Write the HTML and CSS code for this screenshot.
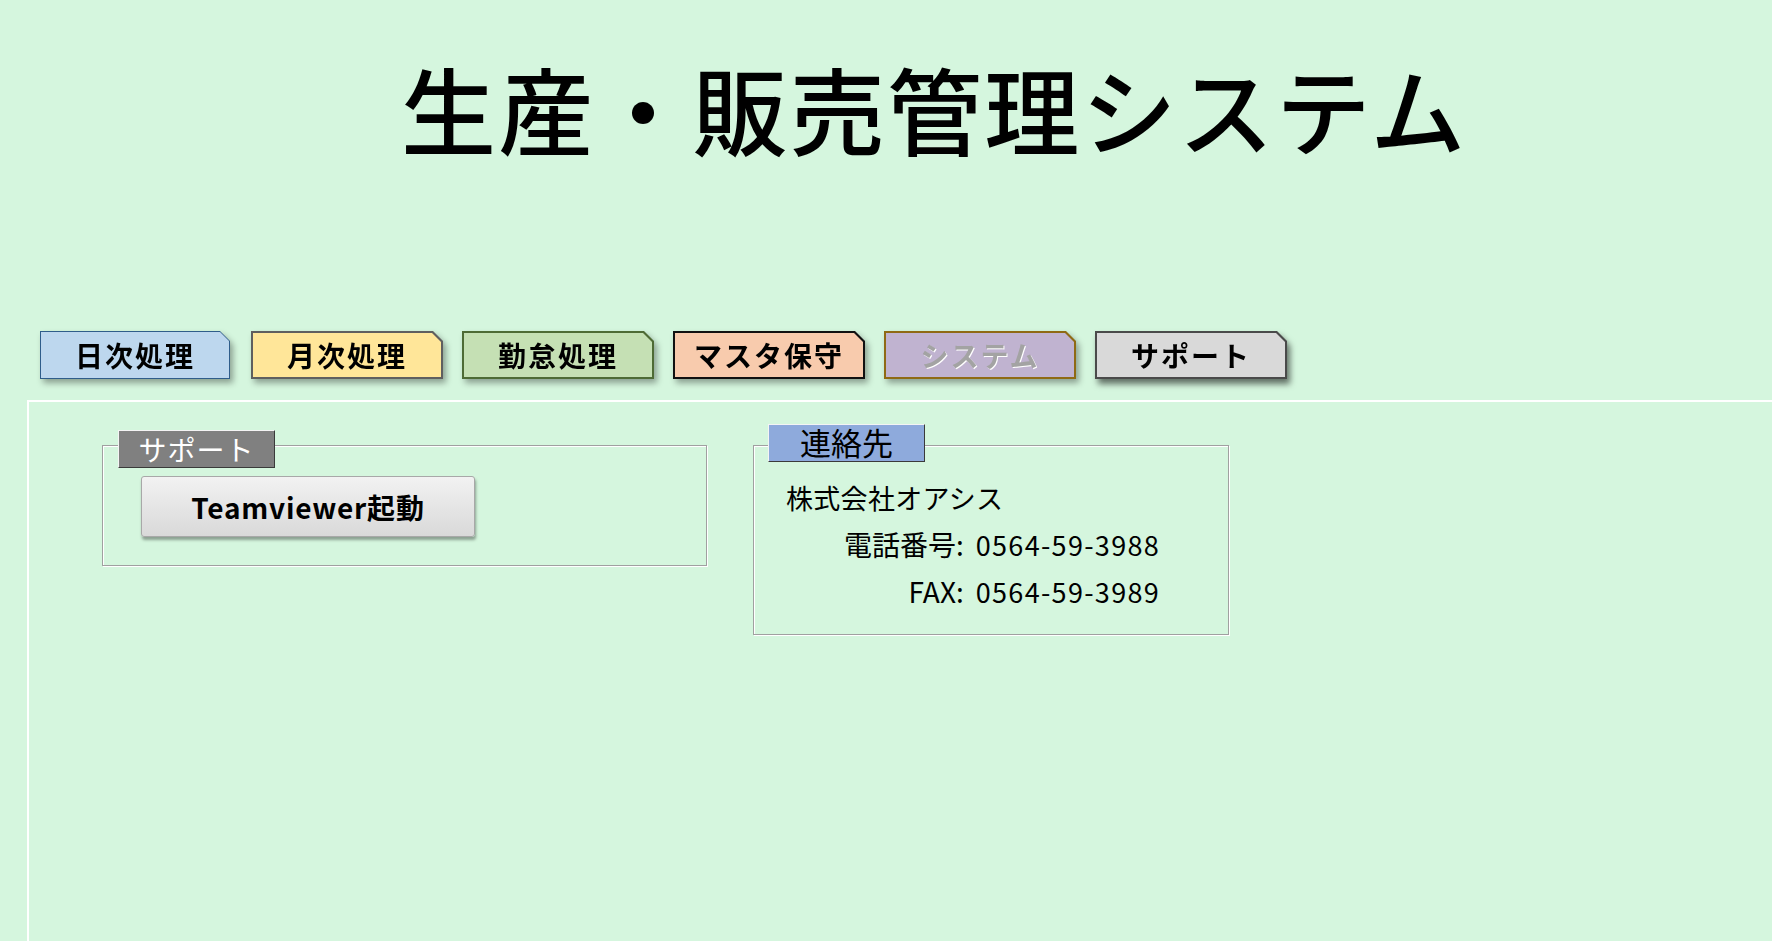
FILE: index.html
```html
<!DOCTYPE html>
<html lang="ja">
<head>
<meta charset="utf-8">
<title>生産・販売管理システム</title>
<link rel="stylesheet" href="styles.css">
</head>
<body>
<header class="title-bar">
  <h1 class="title">生産・販売管理システム</h1>
</header>
<nav class="tabs">
  <div class="tab tab-daily"><div class="tab-edge"><div class="tab-fill">日次処理</div></div></div>
  <div class="tab tab-monthly"><div class="tab-edge"><div class="tab-fill">月次処理</div></div></div>
  <div class="tab tab-attend"><div class="tab-edge"><div class="tab-fill">勤怠処理</div></div></div>
  <div class="tab tab-master"><div class="tab-edge"><div class="tab-fill">マスタ保守</div></div></div>
  <div class="tab tab-system"><div class="tab-edge"><div class="tab-fill">システム</div></div></div>
  <div class="tab tab-support"><div class="tab-edge"><div class="tab-fill">サポート</div></div></div>
</nav>
<main class="panel">
  <section class="group group-support">
    <div class="legend legend-support">サポート</div>
    <button class="tv-button" type="button">Teamviewer起動</button>
  </section>
  <section class="group group-contact">
    <div class="legend legend-contact">連絡先</div>
    <div class="contact-lines">
      <div class="company">株式会社オアシス</div>
      <div class="phone">電話番号:<span class="num">0564-59-3988</span></div>
      <div class="phone">FAX:<span class="num">0564-59-3989</span></div>
    </div>
  </section>
</main>
</body>
</html>
```
FILE: styles.css
```css
html, body {
  margin: 0;
  padding: 0;
  height: 100%;
  overflow: hidden;
}
body {
  background: #d5f6de;
  font-family: "Noto Sans CJK JP", "Noto Sans", sans-serif;
  color: #000;
}
.title-bar {
  padding: 51px 0 0 401px;
  height: 331px;
  box-sizing: border-box;
}
.title {
  margin: 0;
  font-size: 95px;
  line-height: 1.2;
  font-weight: 500;
  letter-spacing: 2.2px;
}
.tabs {
  display: flex;
  gap: 19px;
  padding-left: 40px;
  height: 69px;
}
.tab {
  width: 192px;
  height: 48px;
  filter: drop-shadow(3px 4px 3px rgba(0, 0, 0, 0.35));
}
.tab-daily { width: 190px; margin-right: 2px; }
.tab-edge {
  height: 100%;
  box-sizing: border-box;
  padding: 2px;
  clip-path: polygon(0 0, calc(100% - 10px) 0, 100% 10px, 100% 100%, 0 100%);
}
.tab-fill {
  height: 100%;
  display: flex;
  align-items: center;
  justify-content: center;
  font-size: 28px;
  font-weight: 700;
  letter-spacing: 2px;
  clip-path: polygon(0 0, calc(100% - 9px) 0, 100% 9px, 100% 100%, 0 100%);
}
.tab-daily .tab-edge { background: #2f5d8a; padding: 1px; }
.tab-daily .tab-fill { background: #bdd7ee; }
.tab-monthly .tab-edge { background: #5f5f5f; }
.tab-monthly .tab-fill { background: #ffe699; }
.tab-attend .tab-edge { background: #4e6b35; }
.tab-attend .tab-fill { background: #c5e0b4; }
.tab-master .tab-edge { background: #111; }
.tab-master .tab-fill { background: #f8cbad; }
.tab-system .tab-edge { background: #8f6a14; }
.tab-system .tab-fill {
  background: #c0b3d0;
  color: #a3a3a3;
  text-shadow: 1px 1px 0 #fff;
}
.tab-support { filter: drop-shadow(3px 5px 3px rgba(0, 0, 0, 0.55)); }
.tab-support .tab-edge { background: #4a4a4a; }
.tab-support .tab-fill { background: #d9d9d9; }

.panel {
  margin-left: 27px;
  height: 600px;
  border-top: 2px solid #fff;
  border-left: 2px solid #fff;
  display: flex;
  align-items: flex-start;
  padding-left: 73px;
  padding-top: 43px;
}
.group {
  border: 1px solid #a0a0a0;
  box-shadow: inset 1px 1px 0 #fff, 1px 1px 0 #fff;
  box-sizing: border-box;
}
.group-support {
  width: 605px;
  height: 121px;
  padding-left: 15px;
}
.group-contact {
  width: 476px;
  height: 190px;
  margin-left: 46px;
  padding-left: 14px;
}
.legend {
  width: 157px;
  height: 38px;
  box-sizing: border-box;
  border: 1px solid;
  border-color: #f4f4f4 #3a3a3a #3a3a3a #f4f4f4;
  display: flex;
  align-items: center;
  justify-content: center;
}
.legend-support {
  margin-top: -16px;
  background: #808080;
  color: #fff;
  font-size: 28px;
  letter-spacing: 1px;
}
.legend-contact {
  margin-top: -22px;
  background: #8eaadc;
  color: #000;
  font-size: 31px;
  padding-bottom: 3px;
}
.tv-button {
  display: flex;
  align-items: center;
  justify-content: center;
  margin: 8px 0 0 23px;
  width: 334px;
  height: 61px;
  border: 1px solid #a8a8a8;
  border-radius: 3px;
  background: linear-gradient(#f2f2f2, #d9d9d9);
  box-shadow: 1px 3px 3px rgba(0, 0, 0, 0.35);
  font-family: "Noto Sans CJK JP", "Noto Sans", sans-serif;
  font-size: 28px;
  font-weight: 700;
  letter-spacing: 0.8px;
  color: #000;
  padding: 0;
}
.contact-lines {
  display: flex;
  flex-direction: column;
  width: 392px;
  padding-top: 12px;
}
.company {
  font-size: 27px;
  line-height: 47px;
  padding-left: 18px;
  letter-spacing: 0.3px;
}
.phone {
  font-size: 28px;
  line-height: 47px;
  text-align: right;
}
.num {
  margin-left: 12px;
  letter-spacing: 1.3px;
  font-size: 27px;
}
```
